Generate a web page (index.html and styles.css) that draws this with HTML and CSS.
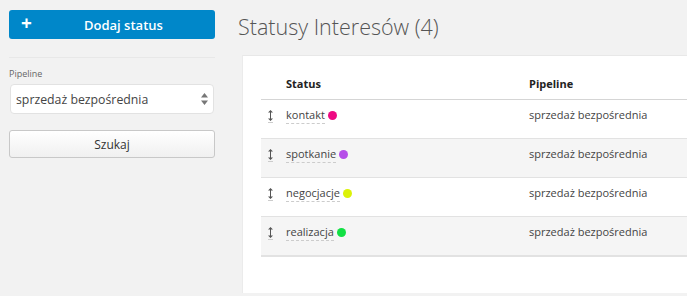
FILE: index.html
```html
<!DOCTYPE html>
<html lang="pl">
<head>
    <meta charset="UTF-8">
    <title>Statusy Interesów</title>
    <link rel="stylesheet" href="styles.css">
</head>
<body>
    <div class="layout">
        <aside class="sidebar">
            <button class="btn-add">
                <span class="plus">+</span>
                <span class="btn-add-label">Dodaj status</span>
            </button>
            <hr class="divider">
            <label class="field-label" for="pipeline">Pipeline</label>
            <div class="select-box">
                <span>sprzedaż bezpośrednia</span>
                <span class="select-arrows">
                    <svg width="7" height="12" viewBox="0 0 7 12"><path d="M3.5 0 L7 4.5 H0 Z M0 7.5 H7 L3.5 12 Z" fill="#777"/></svg>
                </span>
            </div>
            <button class="btn-search">Szukaj</button>
        </aside>

        <main class="content">
            <h1 class="page-title">Statusy Interesów (4)</h1>
            <div class="panel">
                <table class="status-table">
                    <thead>
                        <tr>
                            <th class="col-handle"></th>
                            <th class="col-status">Status</th>
                            <th>Pipeline</th>
                        </tr>
                    </thead>
                    <tbody>
                        <tr>
                            <td class="col-handle"><span class="handle"><svg width="5" height="11" viewBox="0 0 5 11"><path d="M2.5 0 L5 2.5 H0 Z M0 8.5 H5 L2.5 11 Z M2 2 H3 V9 H2 Z" fill="#555"/></svg></span></td>
                            <td class="col-status"><span class="status-name">kontakt</span> <span class="dot dot-pink"></span></td>
                            <td>sprzedaż bezpośrednia</td>
                        </tr>
                        <tr>
                            <td class="col-handle"><span class="handle"><svg width="5" height="11" viewBox="0 0 5 11"><path d="M2.5 0 L5 2.5 H0 Z M0 8.5 H5 L2.5 11 Z M2 2 H3 V9 H2 Z" fill="#555"/></svg></span></td>
                            <td class="col-status"><span class="status-name">spotkanie</span> <span class="dot dot-purple"></span></td>
                            <td>sprzedaż bezpośrednia</td>
                        </tr>
                        <tr>
                            <td class="col-handle"><span class="handle"><svg width="5" height="11" viewBox="0 0 5 11"><path d="M2.5 0 L5 2.5 H0 Z M0 8.5 H5 L2.5 11 Z M2 2 H3 V9 H2 Z" fill="#555"/></svg></span></td>
                            <td class="col-status"><span class="status-name">negocjacje</span> <span class="dot dot-yellow"></span></td>
                            <td>sprzedaż bezpośrednia</td>
                        </tr>
                        <tr>
                            <td class="col-handle"><span class="handle"><svg width="5" height="11" viewBox="0 0 5 11"><path d="M2.5 0 L5 2.5 H0 Z M0 8.5 H5 L2.5 11 Z M2 2 H3 V9 H2 Z" fill="#555"/></svg></span></td>
                            <td class="col-status"><span class="status-name">realizacja</span> <span class="dot dot-green"></span></td>
                            <td>sprzedaż bezpośrednia</td>
                        </tr>
                    </tbody>
                </table>
            </div>
        </main>
    </div>
</body>
</html>
```

FILE: styles.css
```css
/* page base */
body {
    margin: 0;
    background: #f2f2f2;
    font-family: "Open Sans", "Noto Sans", sans-serif;
    color: #333;
    overflow: hidden;
}

.layout {
    display: flex;
    align-items: flex-start;
}

/* left column */
.sidebar {
    width: 206px;
    padding: 10px 0 0 9px;
    display: flex;
    flex-direction: column;
}

.btn-add {
    display: flex;
    align-items: center;
    height: 29px;
    padding: 0 0 0 12px;
    border: none;
    border-radius: 3px;
    background: #0087c9;
    color: #fff;
    font-family: inherit;
    font-size: 13px;
    font-weight: 600;
}

.plus {
    font-size: 19px;
    font-weight: 700;
    line-height: 1;
    margin-top: -2px;
}

.btn-add-label {
    flex: 1;
    text-align: center;
}

.divider {
    border: none;
    border-top: 1px solid #e8e8e8;
    margin: 18px 0 9px;
}

.field-label {
    font-size: 9px;
    color: #666;
    margin-bottom: 4px;
}

.select-box {
    display: flex;
    align-items: center;
    justify-content: space-between;
    height: 28px;
    margin: 0 1px;
    padding: 0 5px 0 5px;
    background: #fff;
    border: 1px solid #e2e2e2;
    border-radius: 4px;
    font-size: 12.3px;
    color: #444;
}

.select-arrows {
    display: flex;
}

.btn-search {
    margin-top: 16px;
    height: 28px;
    border: 1px solid #c8c8c8;
    border-radius: 3px;
    background: linear-gradient(#fff, #f0f0f0);
    font-family: inherit;
    font-size: 12px;
    color: #333;
}

/* main area */
.content {
    flex: 1;
    padding-left: 23px;
}

.page-title {
    margin: 12px 0 0;
    font-size: 21.5px;
    font-weight: 300;
    color: #555;
    line-height: 30px;
}

.panel {
    margin: 13px 0 0 4px;
    padding: 14px 0 36px 18px;
    background: #fff;
    border-top: 1px solid #e8e8e8;
    border-left: 1px solid #ebebeb;
}

.status-table {
    width: 426px;
    border-collapse: collapse;
    font-size: 11px;
}

.status-table th {
    height: 27px;
    text-align: left;
    font-weight: 700;
    color: #222;
    padding: 0 8px 2px;
    border-bottom: 1px solid #d5d5d5;
}

.status-table td {
    height: 29px;
    padding: 0 8px 9px;
    border-bottom: 1px solid #e2e2e2;
    color: #444;
}

.status-table tbody tr:nth-child(even) td {
    background: #f5f5f5;
}

.status-table tbody tr:last-child td {
    border-bottom-width: 2px;
}

.status-table .col-handle {
    width: 4px;
    padding-left: 7px;
    padding-right: 0;
}

.status-table .col-status {
    width: 227px;
    padding-left: 13px;
}

.handle {
    display: inline-block;
    line-height: 0;
    padding-bottom: 1px;
    border-bottom: 1px dashed #ccc;
    vertical-align: -2px;
}

.status-name {
    border-bottom: 1px dashed #ccc;
    padding-bottom: 1px;
}

.dot {
    display: inline-block;
    width: 9px;
    height: 9px;
    border-radius: 50%;
    vertical-align: -1px;
}

.dot-pink { background: #ee0a83; }
.dot-purple { background: #b64ee8; }
.dot-yellow { background: #dcf208; }
.dot-green { background: #12e044; }
```
